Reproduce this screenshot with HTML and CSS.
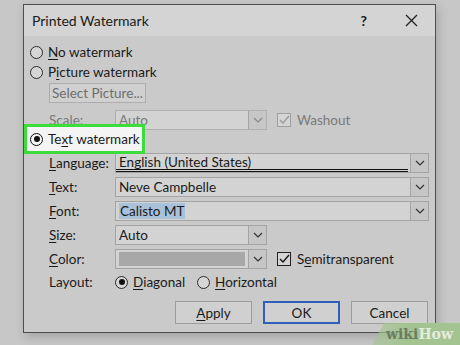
FILE: index.html
```html
<!DOCTYPE html>
<html lang="en">
<head>
    <meta charset="UTF-8">
    <title>Printed Watermark</title>
    <link rel="stylesheet" href="styles.css">
</head>
<body>
    <!-- Dialog window -->
    <div class="dialog">
        <div class="titlebar">
            <span class="title">Printed Watermark</span>
            <span class="help">?</span>
            <svg class="close" width="13" height="13" viewBox="0 0 13 13">
                <path d="M1 1 L12 12 M12 1 L1 12" stroke="#222" stroke-width="1.3" fill="none"/>
            </svg>
        </div>

        <div class="content">
            <div class="row">
                <span class="radio"></span>
                <span><u>N</u>o watermark</span>
            </div>
            <div class="row">
                <span class="radio"></span>
                <span>P<u>i</u>cture watermark</span>
            </div>
            <div class="row sub">
                <button class="btn btn-select">Select Picture...</button>
            </div>
            <div class="row sub scale-row disabled">
                <span class="label">Scale:</span>
                <div class="combo narrow">
                    <span class="value">Auto</span>
                    <span class="arrow"><svg width="10" height="6" viewBox="0 0 10 6"><path d="M1 1 L5 5 L9 1" stroke="#888" stroke-width="1.2" fill="none"/></svg></span>
                </div>
                <span class="check check-disabled">
                    <svg width="11" height="10" viewBox="0 0 11 10"><path d="M1 5 L4 8 L10 1" stroke="#999" stroke-width="1.2" fill="none"/></svg>
                </span>
                <span>Washout</span>
            </div>

            <!-- Highlighted option -->
            <div class="row highlight">
                <span class="radio on"></span>
                <span>Te<u>x</u>t watermark</span>
            </div>

            <div class="fields">
                <div class="row sub">
                    <span class="label"><u>L</u>anguage:</span>
                    <div class="combo wide">
                        <span class="value lang">English (United States)</span>
                        <span class="arrow"><svg width="10" height="6" viewBox="0 0 10 6"><path d="M1 1 L5 5 L9 1" stroke="#333" stroke-width="1.2" fill="none"/></svg></span>
                    </div>
                </div>
                <div class="row sub">
                    <span class="label"><u>T</u>ext:</span>
                    <div class="combo wide">
                        <span class="value">Neve Campbelle</span>
                        <span class="arrow"><svg width="10" height="6" viewBox="0 0 10 6"><path d="M1 1 L5 5 L9 1" stroke="#333" stroke-width="1.2" fill="none"/></svg></span>
                    </div>
                </div>
                <div class="row sub">
                    <span class="label"><u>F</u>ont:</span>
                    <div class="combo wide">
                        <span class="value"><span class="selected">Calisto MT</span></span>
                        <span class="arrow"><svg width="10" height="6" viewBox="0 0 10 6"><path d="M1 1 L5 5 L9 1" stroke="#333" stroke-width="1.2" fill="none"/></svg></span>
                    </div>
                </div>
                <div class="row sub">
                    <span class="label"><u>S</u>ize:</span>
                    <div class="combo narrow">
                        <span class="value">Auto</span>
                        <span class="arrow"><svg width="10" height="6" viewBox="0 0 10 6"><path d="M1 1 L5 5 L9 1" stroke="#333" stroke-width="1.2" fill="none"/></svg></span>
                    </div>
                </div>
                <div class="row sub">
                    <span class="label"><u>C</u>olor:</span>
                    <div class="combo narrow">
                        <span class="value"><span class="swatch"></span></span>
                        <span class="arrow"><svg width="10" height="6" viewBox="0 0 10 6"><path d="M1 1 L5 5 L9 1" stroke="#333" stroke-width="1.2" fill="none"/></svg></span>
                    </div>
                    <span class="check">
                        <svg width="11" height="10" viewBox="0 0 11 10"><path d="M1 5 L4 8 L10 1" stroke="#111" stroke-width="1.3" fill="none"/></svg>
                    </span>
                    <span>S<u>e</u>mitransparent</span>
                </div>
                <div class="row sub layout-row">
                    <span class="label">Layout:</span>
                    <span class="radio on"></span>
                    <span class="opt"><u>D</u>iagonal</span>
                    <span class="radio"></span>
                    <span><u>H</u>orizontal</span>
                </div>
            </div>

            <div class="buttons">
                <button class="btn"><u>A</u>pply</button>
                <button class="btn default">OK</button>
                <button class="btn">Cancel</button>
            </div>
        </div>
    </div>

    <!-- Corner watermark -->
    <div class="wikihow"><span class="wiki">wiki</span>How</div>
</body>
</html>
```

FILE: styles.css
```css
/* Page */
body {
    margin: 0;
    width: 460px;
    height: 345px;
    overflow: hidden;
    background: #c7c7c7;
    font-family: Lato, "Noto Sans", sans-serif;
    font-size: 13.5px;
    color: #1a1a1a;
    position: relative;
}

u {
    text-underline-offset: 2px;
    text-decoration-thickness: 1px;
}

/* Dialog frame */
.dialog {
    width: 411px;
    height: 327px;
    margin: 4px 0 0 23px;
    border: 1px solid #4e4e4e;
    background: #cacaca;
    box-shadow: 2px 4px 10px rgba(0, 0, 0, 0.18);
}

.titlebar {
    height: 31px;
    background: #d4d4d4;
    display: flex;
    align-items: center;
    padding-left: 8px;
}

.title {
    font-size: 14px;
    flex: 1;
}

.help {
    font-size: 14px;
    font-weight: bold;
    margin-right: 38px;
}

.close {
    margin-right: 17px;
}

.content {
    padding: 6px 0 0 6px;
}

/* Rows */
.row {
    display: flex;
    align-items: center;
    height: 20px;
}

.sub {
    padding-left: 19px;
}

.row .btn-select {
    margin-top: 1px;
}

.scale-row {
    margin-top: 8px;
}

.disabled {
    color: #7a7a7a;
}

.label {
    width: 66px;
}

/* Radio buttons and checkboxes */
.radio {
    width: 11px;
    height: 11px;
    border: 1.3px solid #2a2a2a;
    border-radius: 50%;
    background: #d6d6d6;
    margin-right: 5px;
    display: flex;
    align-items: center;
    justify-content: center;
}

.radio.on::after {
    content: "";
    width: 6px;
    height: 6px;
    border-radius: 50%;
    background: #111;
}

.check {
    width: 12px;
    height: 12px;
    border: 1px solid #222;
    background: #d4d4d4;
    margin: 0 6px 0 10px;
    display: flex;
    align-items: center;
    justify-content: center;
}

.check-disabled {
    border-color: #a0a0a0;
}

/* Highlighted Text watermark option */
.highlight {
    height: 24px;
    width: 112px;
    margin: -6px 0 0 -6px;
    padding-left: 3px;
    border: 3px solid #3ddc3a;
    background: #f4f4f4;
    box-sizing: content-box;
    position: relative;
}

.highlight .radio {
    border-color: #111;
    background: #f4f4f4;
}

.fields .row {
    margin-top: 4px;
}

.fields .row:first-child {
    margin-top: -1px;
}

.fields .layout-row {
    margin-top: 3px;
}

/* Combo boxes */
.combo {
    display: flex;
    height: 18px;
    border: 1px solid #a4a4a4;
    background: #d3d3d3;
}

.combo.wide {
    width: 312px;
}

.combo.narrow {
    width: 150px;
}

.combo .value {
    flex: 1;
    padding-left: 3px;
    display: flex;
    align-items: center;
}

.combo .value.lang {
    border-bottom: 3px double #111;
    height: 15px;
    margin-right: 2px;
}

.disabled .combo {
    border-color: #b0b0b0;
}

.arrow {
    width: 17px;
    border-left: 1px solid #a4a4a4;
    background: #c6c6c6;
    display: flex;
    align-items: center;
    justify-content: center;
}

.selected {
    background: #a9c2d9;
    padding: 0 1px;
}

.swatch {
    width: 126px;
    height: 14px;
    background: #a8a8a8;
}

.layout-row .opt {
    margin-right: 12px;
}

/* Buttons */
.btn {
    font-family: inherit;
    font-size: 13.5px;
    color: #1a1a1a;
    width: 77px;
    height: 23px;
    border: 1px solid #9c9c9c;
    background: #d0d0d0;
    padding: 0;
}

.btn-select {
    width: 97px;
    height: 20px;
    color: #6e6e6e;
    border-color: #adadad;
}

.buttons {
    display: flex;
    gap: 11px;
    margin: 9px 0 0 145px;
}

.btn.default {
    border: 2px solid #2f5fb8;
}

/* wikiHow corner mark */
.wikihow {
    position: absolute;
    right: 0;
    bottom: 0;
    width: 88px;
    height: 22px;
    padding-left: 14px;
    box-sizing: border-box;
    background: linear-gradient(90deg, rgba(160, 196, 140, 0.5), #a3c490 40%);
    clip-path: polygon(12px 0, 100% 0, 100% 100%, 0 100%);
    font-family: "DejaVu Serif", serif;
    font-weight: bold;
    font-size: 14px;
    line-height: 22px;
    color: #e3ebdc;
}

.wiki {
    color: #6c7b62;
}
```
